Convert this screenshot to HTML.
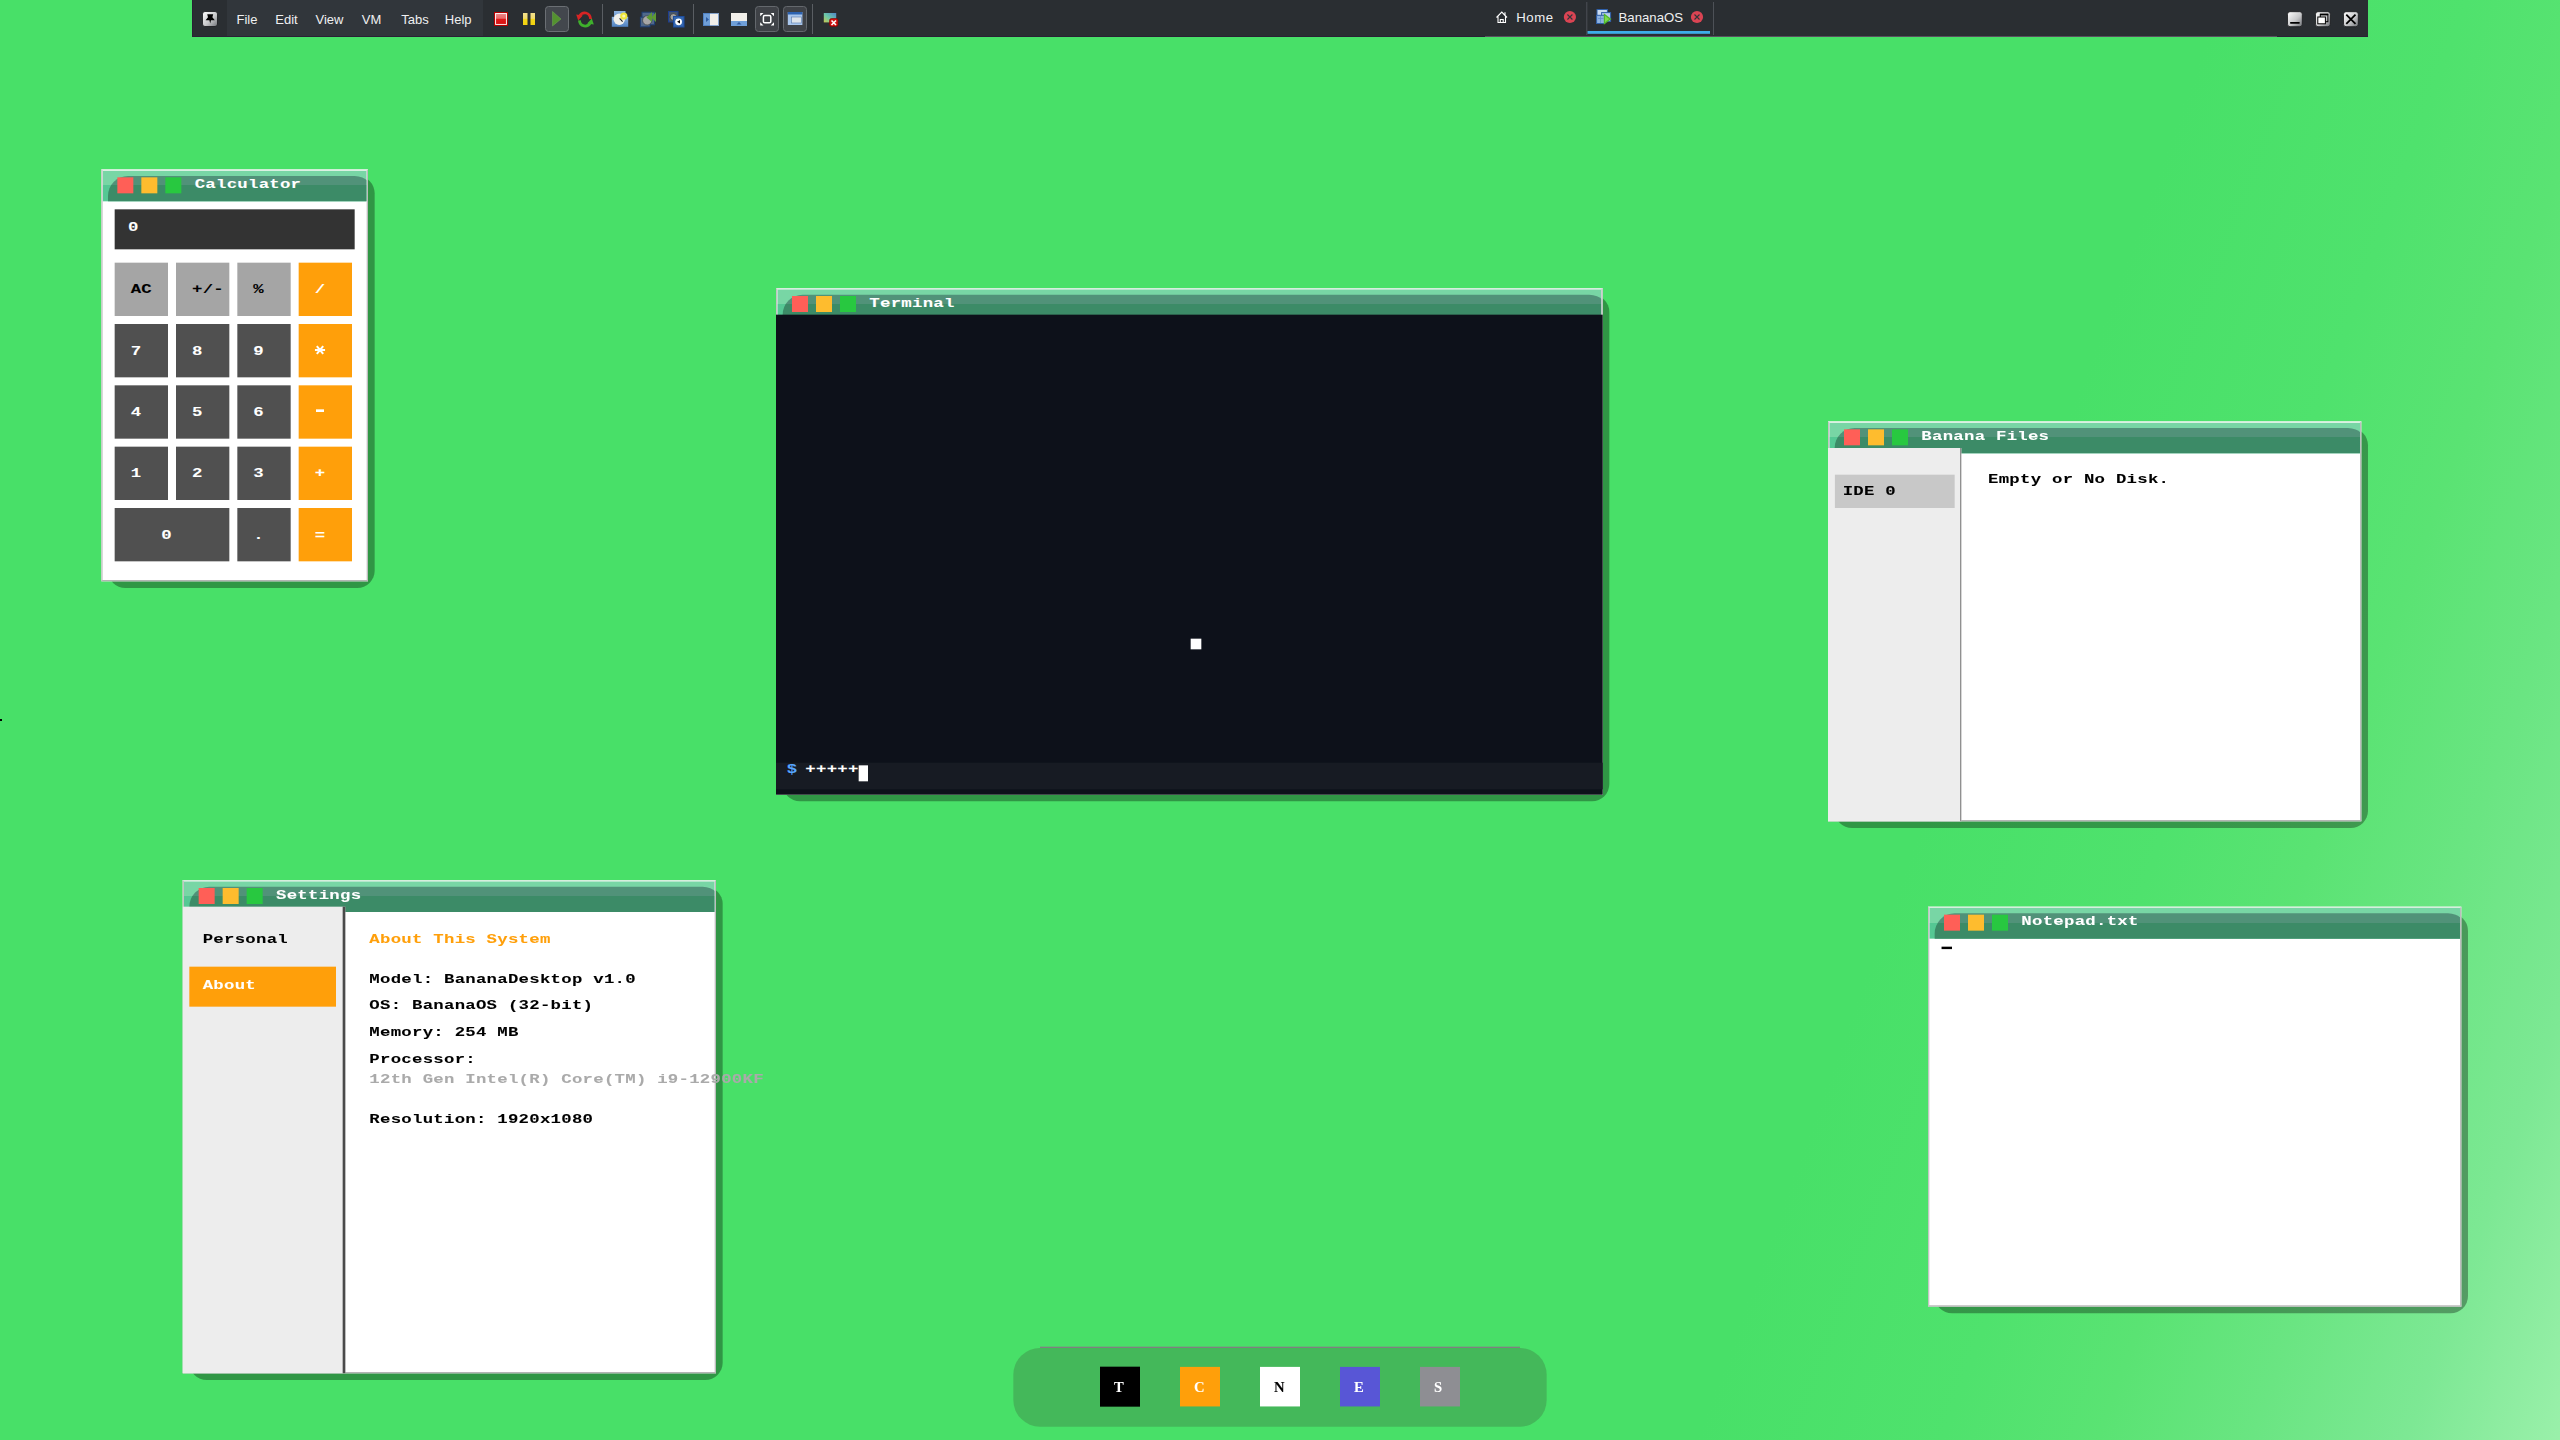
<!DOCTYPE html><html><head><meta charset="utf-8"><style>
*{box-sizing:border-box;margin:0;padding:0}
html,body{width:2560px;height:1440px;overflow:hidden}
body{position:relative;background:#48E068;font-family:"Liberation Mono",monospace}
#bg{position:absolute;left:0;top:0;width:2560px;height:1440px;
 background:linear-gradient(110deg,#48E068 0%,#48E068 72%,#4FE26D 80%,#5AE373 85%,#6AE582 90%,#7DE894 95%,#9AF0AA 100%)}
#g{position:absolute;left:0;top:0;width:1920px;height:1080px;transform:scale(1.3333333);transform-origin:0 0}
.ab{position:absolute}
.sh{position:absolute;background:rgba(0,0,0,.33);border-radius:13px}
.fr{position:absolute;border:1px solid #B4B4B4;border-left-color:#C4C4C4;border-right-color:#BDBDBD;border-top-color:#D6EEDD;overflow:hidden;background:#fff}
.tb{position:absolute;left:0;top:0;right:0;height:23px;overflow:hidden;background:linear-gradient(#78D6A5 0,#78D6A5 11px,#55C894 11px)}
.tbd{position:absolute;left:4px;top:4px;right:-6px;height:40px;border-radius:15px 15px 0 0;background:linear-gradient(#519279 0,#519279 7px,#3C8B67 7px)}
.bt{position:absolute;top:5px;width:12px;height:12px}
.b1{left:11px;background:#FF5F57}.b2{left:29px;background:#FEBC2E}.b3{left:47px;background:#28C840}
.tx{position:absolute;font-weight:bold;font-size:10px;line-height:14px;letter-spacing:0.15px;white-space:nowrap;color:#000;transform:scaleX(1.3);transform-origin:0 0;-webkit-text-stroke:0.05px currentColor}
.tt{color:#fff}
.ms{position:absolute;font-family:"Liberation Sans",sans-serif;font-size:13px;line-height:16px;color:#EFF0F1;white-space:nowrap}
</style></head><body>
<div id="bg"></div>
<div class="ab" style="left:0;top:719px;width:2px;height:2px;background:#000"></div>
<div id="g">
<div class="sh" style="left:81px;top:132px;width:200px;height:309px"></div>
<div class="fr" style="left:76px;top:127px;width:200px;height:309px;background:#fff"><div class="tb"><div class="tbd"></div><div class="bt b1"></div><div class="bt b2"></div><div class="bt b3"></div></div></div>
<div class="tx" style="left:145.5px;top:131.50px;color:#fff;">Calculator</div>
<div class="ab" style="left:86px;top:157px;width:180px;height:30px;background:#333333;"></div>
<div class="tx" style="left:96px;top:164.40px;color:#fff;">0</div>
<div class="ab" style="left:86px;top:197px;width:40px;height:40px;background:#A5A5A5;"></div>
<div class="tx" style="left:98px;top:210.90px;color:#000;">AC</div>
<div class="ab" style="left:132px;top:197px;width:40px;height:40px;background:#A5A5A5;"></div>
<div class="tx" style="left:144px;top:210.90px;color:#000;">+/-</div>
<div class="ab" style="left:178px;top:197px;width:40px;height:40px;background:#A5A5A5;"></div>
<div class="tx" style="left:190px;top:210.90px;color:#000;">%</div>
<div class="ab" style="left:224px;top:197px;width:40px;height:40px;background:#FF9F0A;"></div>
<div class="tx" style="left:236px;top:210.90px;color:#fff;">/</div>
<div class="ab" style="left:86px;top:243px;width:40px;height:40px;background:#505050;"></div>
<div class="tx" style="left:98px;top:256.90px;color:#fff;">7</div>
<div class="ab" style="left:132px;top:243px;width:40px;height:40px;background:#505050;"></div>
<div class="tx" style="left:144px;top:256.90px;color:#fff;">8</div>
<div class="ab" style="left:178px;top:243px;width:40px;height:40px;background:#505050;"></div>
<div class="tx" style="left:190px;top:256.90px;color:#fff;">9</div>
<div class="ab" style="left:224px;top:243px;width:40px;height:40px;background:#FF9F0A;"></div>
<svg class="ab" style="left:235px;top:258px" width="10" height="9" viewBox="0 0 10 9"><path d="M1.2 4.5 H8.8 M2.6 1.6 L7.4 7.4 M7.4 1.6 L2.6 7.4" stroke="#fff" stroke-width="1.5"/><rect x="3.6" y="3.2" width="2.8" height="2.6" fill="#fff"/></svg>
<div class="ab" style="left:86px;top:289px;width:40px;height:40px;background:#505050;"></div>
<div class="tx" style="left:98px;top:302.90px;color:#fff;">4</div>
<div class="ab" style="left:132px;top:289px;width:40px;height:40px;background:#505050;"></div>
<div class="tx" style="left:144px;top:302.90px;color:#fff;">5</div>
<div class="ab" style="left:178px;top:289px;width:40px;height:40px;background:#505050;"></div>
<div class="tx" style="left:190px;top:302.90px;color:#fff;">6</div>
<div class="ab" style="left:224px;top:289px;width:40px;height:40px;background:#FF9F0A;"></div>
<div class="ab" style="left:237px;top:307.1px;width:6px;height:2.4px;background:#fff;"></div>
<div class="ab" style="left:86px;top:335px;width:40px;height:40px;background:#505050;"></div>
<div class="tx" style="left:98px;top:348.90px;color:#fff;">1</div>
<div class="ab" style="left:132px;top:335px;width:40px;height:40px;background:#505050;"></div>
<div class="tx" style="left:144px;top:348.90px;color:#fff;">2</div>
<div class="ab" style="left:178px;top:335px;width:40px;height:40px;background:#505050;"></div>
<div class="tx" style="left:190px;top:348.90px;color:#fff;">3</div>
<div class="ab" style="left:224px;top:335px;width:40px;height:40px;background:#FF9F0A;"></div>
<div class="tx" style="left:236px;top:348.90px;color:#fff;">+</div>
<div class="ab" style="left:86px;top:381px;width:86px;height:40px;background:#505050;"></div>
<div class="tx" style="left:121px;top:394.90px;color:#fff;">0</div>
<div class="ab" style="left:178px;top:381px;width:40px;height:40px;background:#505050;"></div>
<div class="tx" style="left:190px;top:394.90px;color:#fff;">.</div>
<div class="ab" style="left:224px;top:381px;width:40px;height:40px;background:#FF9F0A;"></div>
<div class="tx" style="left:236px;top:394.90px;color:#fff;">=</div>
<div class="sh" style="left:587px;top:221px;width:620px;height:380px"></div>
<div class="fr" style="left:582px;top:216px;width:620px;height:380px;background:#fff"><div class="tb"><div class="tbd"></div><div class="bt b1"></div><div class="bt b2"></div><div class="bt b3"></div></div></div>
<div class="tx" style="left:651.5px;top:220.50px;color:#fff;">Terminal</div>
<div class="ab" style="left:582px;top:236px;width:620px;height:360px;background:#0D111A;"></div>
<div class="ab" style="left:582px;top:572px;width:620px;height:19.5px;background:#171B23;"></div>
<div class="tx" style="left:589.8px;top:571.10px;color:#58A6FF;">$</div>
<div class="tx" style="left:604.4px;top:571.10px;color:#fff;">+++++</div>
<div class="ab" style="left:644px;top:574px;width:7px;height:12px;background:#fff;"></div>
<div class="ab" style="left:893px;top:479px;width:8px;height:8px;background:#fff;"></div>
<div class="sh" style="left:1376px;top:321px;width:400px;height:300px"></div>
<div class="fr" style="left:1371px;top:316px;width:400px;height:300px;background:#fff"><div class="tb"><div class="tbd"></div><div class="bt b1"></div><div class="bt b2"></div><div class="bt b3"></div></div></div>
<div class="tx" style="left:1440.5px;top:320.50px;color:#fff;">Banana Files</div>
<div class="ab" style="left:1371px;top:336px;width:100px;height:280px;background:#EDEDED;border-right:1px solid #909090;"></div>
<div class="ab" style="left:1376px;top:356px;width:90px;height:25px;background:#C8C8C8;"></div>
<div class="tx" style="left:1381.5px;top:361.90px;">IDE 0</div>
<div class="tx" style="left:1491px;top:353.40px;">Empty or No Disk.</div>
<div class="sh" style="left:142px;top:665px;width:400px;height:370px"></div>
<div class="fr" style="left:137px;top:660px;width:400px;height:370px;background:#fff"><div class="tb"><div class="tbd"></div><div class="bt b1"></div><div class="bt b2"></div><div class="bt b3"></div></div></div>
<div class="tx" style="left:206.5px;top:664.50px;color:#fff;">Settings</div>
<div class="ab" style="left:137px;top:680px;width:122px;height:350px;background:#EDEDED;border-right:2px solid #4A4A4A;"></div>
<div class="ab" style="left:142px;top:725px;width:110px;height:30px;background:#FF9F0A;"></div>
<div class="tx" style="left:152px;top:697.90px;">Personal</div>
<div class="tx" style="left:152px;top:732.90px;color:#fff;">About</div>
<div class="tx" style="left:277px;top:697.90px;color:#FF9F0A;">About This System</div>
<div class="tx" style="left:277px;top:727.90px;">Model: BananaDesktop v1.0</div>
<div class="tx" style="left:277px;top:747.90px;">OS: BananaOS (32-bit)</div>
<div class="tx" style="left:277px;top:767.90px;">Memory: 254 MB</div>
<div class="tx" style="left:277px;top:787.90px;">Processor:</div>
<div class="tx" style="left:277px;top:802.90px;color:#AAAAAA;">12th Gen Intel(R) Core(TM) i9-12900KF</div>
<div class="tx" style="left:277px;top:832.90px;">Resolution: 1920x1080</div>
<div class="sh" style="left:1451px;top:685px;width:400px;height:300px"></div>
<div class="fr" style="left:1446px;top:680px;width:400px;height:300px;background:#fff"><div class="tb"><div class="tbd"></div><div class="bt b1"></div><div class="bt b2"></div><div class="bt b3"></div></div></div>
<div class="tx" style="left:1515.5px;top:684.50px;color:#fff;">Notepad.txt</div>
<div class="ab" style="left:1456px;top:710px;width:8px;height:2px;background:#000;"></div>
<div class="ab" style="left:760px;top:1011px;width:400px;height:59px;background:#44B85A;border-radius:20px;"></div>
<div class="ab" style="left:780px;top:1010px;width:360px;height:1px;background:#808080;"></div>
<div class="ab" style="left:825px;top:1025px;width:30px;height:30px;background:#000;"></div>
<div class="tx" style="left:835.6px;top:1032.80px;color:#fff;font-family:'Liberation Serif',serif;font-size:11px;transform:none;">T</div>
<div class="ab" style="left:885px;top:1025px;width:30px;height:30px;background:#FF9F0A;"></div>
<div class="tx" style="left:895.6px;top:1032.80px;color:#fff;font-family:'Liberation Serif',serif;font-size:11px;transform:none;">C</div>
<div class="ab" style="left:945px;top:1025px;width:30px;height:30px;background:#fff;"></div>
<div class="tx" style="left:955.6px;top:1032.80px;color:#000;font-family:'Liberation Serif',serif;font-size:11px;transform:none;">N</div>
<div class="ab" style="left:1005px;top:1025px;width:30px;height:30px;background:#5856D6;"></div>
<div class="tx" style="left:1015.6px;top:1032.80px;color:#fff;font-family:'Liberation Serif',serif;font-size:11px;transform:none;">E</div>
<div class="ab" style="left:1065px;top:1025px;width:30px;height:30px;background:#8E8E93;"></div>
<div class="tx" style="left:1075.6px;top:1032.80px;color:#fff;font-family:'Liberation Serif',serif;font-size:11px;transform:none;">S</div>
</div>
<svg class="ab" style="left:0;top:0" width="2560" height="40">
<defs>
<linearGradient id="silv" x1="0" y1="0" x2="1" y2="1"><stop offset="0" stop-color="#FFFFFF"/><stop offset=".55" stop-color="#C8C9CB"/><stop offset="1" stop-color="#6E7176"/></linearGradient>
<linearGradient id="redg" x1="0" y1="0" x2="0" y2="1"><stop offset="0" stop-color="#EC8A8A"/><stop offset=".45" stop-color="#E86A6A"/><stop offset=".5" stop-color="#E01B1B"/><stop offset="1" stop-color="#D60F0F"/></linearGradient>
<linearGradient id="yelg" x1="0" y1="0" x2="0" y2="1"><stop offset="0" stop-color="#F3E08A"/><stop offset=".45" stop-color="#F1DB6E"/><stop offset=".5" stop-color="#F5D71C"/><stop offset="1" stop-color="#F2D20E"/></linearGradient>
<linearGradient id="blug" x1="0" y1="0" x2="0" y2="1"><stop offset="0" stop-color="#8FB3DF"/><stop offset="1" stop-color="#4F82C2"/></linearGradient>
</defs>
<!-- base -->
<rect x="192" y="0" width="2176" height="37" fill="#2A2E32"/>
<rect x="227" y="0" width="256" height="36" fill="#31363B"/>
<rect x="192" y="0" width="1" height="37" fill="#2A2035"/>
<rect x="192" y="36" width="1293" height="1" fill="#2A2035"/>
<rect x="1485" y="36" width="792" height="1" fill="#5A5060"/>
<rect x="2277" y="36" width="91" height="1" fill="#2A2035"/>
<!-- pin -->
<rect x="202.5" y="11.5" width="15" height="15" rx="2.5" fill="url(#silv)" stroke="#15171A" stroke-width="0.8"/>
<path d="M207.2 14.2 H213.2 L212.4 17.2 L214.8 20.2 H211 L210.2 23.6 L209.4 20.2 H205.6 L208 17.2 Z" fill="#000"/>
<!-- menu -->
<g font-family="Liberation Sans" font-size="13" fill="#EFF0F1">
<text x="236.5" y="24">File</text><text x="275.3" y="24">Edit</text><text x="315.5" y="24">View</text>
<text x="361.8" y="24">VM</text><text x="401.3" y="24">Tabs</text><text x="444.8" y="24">Help</text>
</g>
<!-- stop -->
<rect x="494.5" y="12.5" width="13" height="13" fill="url(#redg)" stroke="#B50000" stroke-width="1"/>
<rect x="495.6" y="13.6" width="10.8" height="10.8" fill="none" stroke="#FFF" stroke-width="0.9"/>
<!-- pause -->
<rect x="523" y="13" width="4.5" height="12" fill="url(#yelg)"/><rect x="530.5" y="13" width="4.5" height="12" fill="url(#yelg)"/>
<!-- play box -->
<rect x="545.5" y="6.5" width="23" height="25" rx="3" fill="#43474D" stroke="#6B6F74" stroke-width="1"/>
<path d="M552.5 11.5 L561 19 L552.5 26 Z" fill="#54922F" stroke="#6FA855" stroke-width=".5"/>
<!-- refresh -->
<g transform="translate(0,-1.2)"><path d="M590.6 20.2 C590 13.2 582.5 12.2 579.6 17.2" fill="none" stroke="#D82424" stroke-width="2.8"/>
<path d="M576.2 15.6 L582.8 16.6 L578.2 21.6 Z" fill="#D82424"/></g>
<g transform="translate(0,1.2)"><path d="M579.4 19.2 C580 25.8 587.5 26.6 590.4 21.6" fill="none" stroke="#3FB02C" stroke-width="2.8"/>
<path d="M593.8 23.2 L587.2 22.4 L591.8 17.2 Z" fill="#3FB02C"/></g>
<rect x="602" y="4" width="1" height="30" fill="#5A5E63"/>
<!-- snapshot 1 -->
<rect x="614" y="11" width="11.5" height="10" fill="url(#blug)"/>
<rect x="611.8" y="16.8" width="16.4" height="10" fill="url(#blug)"/>
<circle cx="619.3" cy="19.2" r="5.7" fill="#EFEFEA"/>
<circle cx="623.8" cy="16" r="3.6" fill="#EDE63A"/><circle cx="623.8" cy="16" r="1.6" fill="#FAF6B0"/>
<path d="M619.6 18.4 L622.6 21.6" stroke="#222" stroke-width="1.1"/>
<!-- snapshot 2 -->
<rect x="642" y="12.2" width="12.6" height="12.6" fill="#50698A" stroke="#1E3F74" stroke-width="1"/>
<rect x="640.4" y="17.2" width="9.6" height="9.6" fill="#50698A" stroke="#1E3F74" stroke-width="1"/>
<circle cx="647.2" cy="20.4" r="4.6" fill="#A6A6A6" stroke="#333" stroke-width=".6"/>
<path d="M646.5 17.5 L652 12 V22 Z M651.5 17.5 L656 12 V22 Z" fill="#5D9A34"/>
<!-- snapshot 3 -->
<rect x="668.5" y="11.5" width="9.5" height="10.5" fill="#44566E" stroke="#1D3D8E" stroke-width="1"/>
<circle cx="673.4" cy="17" r="3.4" fill="#A0A0A0" stroke="#222" stroke-width=".6"/>
<rect x="673.5" y="16.5" width="10.5" height="10.5" fill="#3567B0" stroke="#1D4D9E" stroke-width="1"/>
<circle cx="678.6" cy="21.8" r="3.4" fill="#FFF"/><path d="M677 21.8 L680 20 V23.6 Z" fill="#000"/>
<rect x="693" y="4" width="1" height="30" fill="#5A5E63"/>
<!-- sidebar icon -->
<rect x="703" y="13" width="16" height="13" fill="#F1EFEA"/><rect x="703" y="13" width="7" height="13" fill="#6F9FD8"/>
<rect x="703.5" y="13.5" width="15" height="12" fill="none" stroke="#3E6FB5" stroke-width="1" opacity=".6"/>
<path d="M706 17 L709 19.5 L706 22 Z" fill="#2E5AA0"/>
<!-- bottom panel icon -->
<rect x="731" y="13" width="16" height="13" fill="#F1EFEA"/><rect x="731" y="21" width="16" height="5" fill="#6F9FD8"/>
<path d="M736.5 24.5 L739 22 L741.5 24.5 Z" fill="#2E5AA0"/>
<!-- fullscreen box -->
<rect x="755.5" y="6.5" width="23" height="25" rx="3" fill="#3F4247" stroke="#64686D" stroke-width="1"/>
<rect x="763.4" y="15.6" width="7.4" height="7.2" rx="1.4" fill="none" stroke="#FFF" stroke-width="1.5"/>
<path d="M760.2 16.2 V12.9 H763.5 Z M774 16.2 V12.9 H770.7 Z M760.2 22.2 V25.5 H763.5 Z M774 22.2 V25.5 H770.7 Z" fill="#FFF"/>
<!-- unity box -->
<rect x="783.5" y="6.5" width="23" height="25" rx="3" fill="#3F4247" stroke="#64686D" stroke-width="1"/>
<rect x="787.8" y="12" width="14.6" height="13" fill="#A9C6EC"/><rect x="787.8" y="12" width="14.6" height="2.5" fill="#2D62B0"/>
<rect x="791.5" y="17" width="10" height="6" fill="#DDE3EA" stroke="#5577AA" stroke-width=".6"/>
<rect x="812" y="4" width="1" height="30" fill="#5A5E63"/>
<!-- last icon -->
<linearGradient id="scrg" x1="0" y1="1" x2="1" y2="0"><stop offset="0" stop-color="#C9C850"/><stop offset=".45" stop-color="#6CC8A8"/><stop offset="1" stop-color="#4F86C8"/></linearGradient><rect x="823.8" y="13" width="12.4" height="9.4" fill="url(#scrg)"/>
<rect x="829.5" y="18.5" width="8.5" height="8" rx="2" fill="#CC1010" stroke="#7A0000" stroke-width=".6"/>
<path d="M831.5 20.5 L836 25 M836 20.5 L831.5 25" stroke="#FFF" stroke-width="1.6"/>
<!-- tabs -->
<path d="M1496.5 17.5 L1501.8 12 L1507 17.5 M1498 16 V22.5 H1505.5 V16 M1500.3 22.5 V19.5 H1503.2 V22.5 M1505 12.2 V15" fill="none" stroke="#FFF" stroke-width="1.1"/>
<text x="1516.2" y="21.9" font-family="Liberation Sans" font-size="13.2" letter-spacing="0.6" fill="#EFF0F1">Home</text>
<circle cx="1569.9" cy="17" r="6.1" fill="#DA4453"/>
<path d="M1567.4 14.5 L1572.4 19.5 M1572.4 14.5 L1567.4 19.5" stroke="#31363B" stroke-width="1.1"/>
<rect x="1586.3" y="2" width="1" height="33" fill="#4D5157"/>
<rect x="1597" y="9.5" width="10.4" height="6.8" fill="#C9DAF0" stroke="#2F5FA8" stroke-width="1"/>
<rect x="1601.6" y="12.6" width="9" height="8.8" fill="#B7CDEB" stroke="#2F5FA8" stroke-width="1"/>
<rect x="1596.6" y="15.3" width="8" height="8.2" fill="#8EB2E0" stroke="#2F5FA8" stroke-width="1"/>
<path d="M1598 18.5 H1603.5 M1600.5 16 V23" stroke="#5E8BC8" stroke-width=".7"/>
<path d="M1603.8 13.2 L1611.4 19 L1603.8 24.8 Z" fill="#52B82A"/>
<path d="M1605 15.8 L1609.2 19 L1605 22.2 Z" fill="#7ED84E"/>
<text x="1618.5" y="21.9" font-family="Liberation Sans" font-size="13.2" fill="#EFF0F1">BananaOS</text>
<circle cx="1697" cy="17" r="6.1" fill="#DA4453"/>
<path d="M1694.5 14.5 L1699.5 19.5 M1699.5 14.5 L1694.5 19.5" stroke="#31363B" stroke-width="1.1"/>
<rect x="1713" y="2" width="1" height="33" fill="#4D5157"/>
<rect x="1587.5" y="31" width="122.5" height="2.8" fill="#3DAEE9"/>
<!-- window controls -->
<g stroke="#16181B" stroke-width="0.8">
<rect x="2287.5" y="11.7" width="14.8" height="15" rx="2.5" fill="url(#silv)"/>
<rect x="2315.5" y="11.7" width="14.8" height="15" rx="2.5" fill="url(#silv)"/>
<rect x="2343.5" y="11.7" width="14.8" height="15" rx="2.5" fill="url(#silv)"/>
</g>
<rect x="2290" y="22" width="9.8" height="1.8" rx=".8" fill="#000"/>
<rect x="2320.3" y="14.2" width="7.6" height="7.5" fill="none" stroke="#000" stroke-width="1"/><rect x="2320" y="13.8" width="8.2" height="1.6" fill="#000"/>
<rect x="2317.8" y="17" width="7.6" height="6.8" fill="#FFF" stroke="#000" stroke-width="1"/>
<path d="M2346.3 14.6 L2355.5 23.9 M2355.5 14.6 L2346.3 23.9" stroke="#000" stroke-width="1.8"/>
</svg>

</body></html>
